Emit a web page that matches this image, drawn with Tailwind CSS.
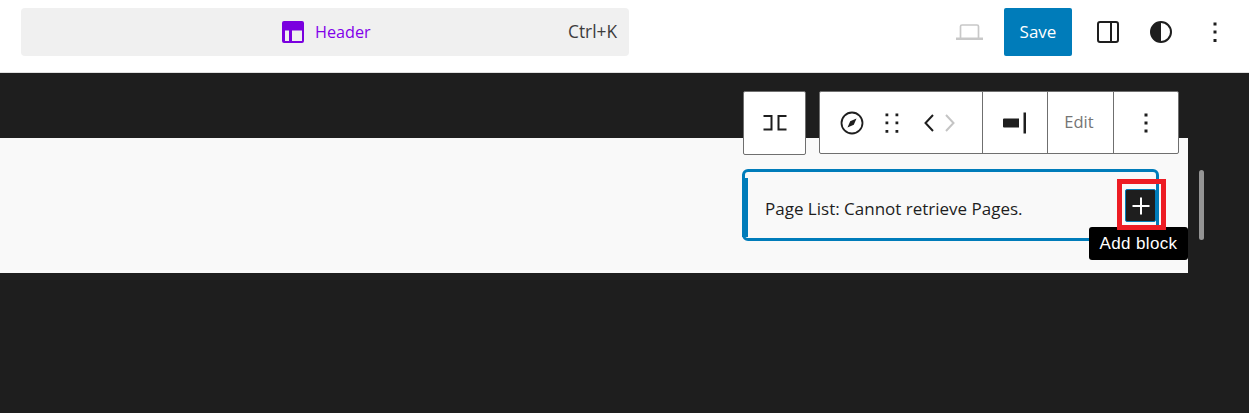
<!DOCTYPE html>
<html lang="en">
<head>
  <meta charset="UTF-8">
  <title>Header</title>
  <script src="https://cdn.jsdelivr.net/npm/@tailwindcss/browser@4"></script>
</head>
<body class="h-[413px] overflow-hidden bg-[#1e1e1e] font-['Open_Sans','Noto_Sans',sans-serif] text-[#1e1e1e]">

  <!-- Top bar -->
  <header class="flex h-[73px] items-start border-b border-[#e0e0e0] bg-white pt-2">
    <div class="ml-[21px] flex h-12 w-[608px] items-center rounded-[4px] bg-[#f0f0f0] pr-3">
      <div class="ml-[261px] flex items-center text-[16.200px] text-[#8200ea]">
        <svg class="h-[22px] w-[22px]" viewBox="0 0 22 22"><path fill="#7a00df" fill-rule="evenodd" d="M2 0h18a2 2 0 0 1 2 2v18a2 2 0 0 1-2 2H2a2 2 0 0 1-2-2V2a2 2 0 0 1 2-2Zm1 9.500V20h4V9.500H3Zm7 0V20h10V9.500H10Z"/></svg>
        <span class="ml-[11px]">Header</span>
      </div>
      <span class="ml-auto text-[17.300px] text-[#3c3c3c]">Ctrl+K</span>
    </div>

    <svg class="ml-[327px] mt-4 h-4 w-[27px]" viewBox="0 0 27 16"><path fill="none" stroke="#c8c8c8" stroke-width="1.700" d="M4.500 14V2.500a1.500 1.500 0 0 1 1.500-1.500h15a1.500 1.500 0 0 1 1.500 1.500V14"/><path fill="#c8c8c8" d="M0 13.500h27V16H0z"/></svg>
    <button class="ml-[21px] flex h-12 w-[68px] items-center justify-center rounded-[2px] bg-[#007cba] text-[17px] text-white">Save</button>
    <svg class="ml-[25px] mt-[13px] h-[22px] w-[22px]" viewBox="0 0 22 22"><path fill="none" stroke="#1e1e1e" stroke-width="2" d="M3 1h16a2 2 0 0 1 2 2v16a2 2 0 0 1-2 2H3a2 2 0 0 1-2-2V3a2 2 0 0 1 2-2ZM14 1v20"/></svg>
    <svg class="ml-[31px] mt-[13px] h-[22px] w-[22px]" viewBox="0 0 22 22"><circle cx="11" cy="11" r="10" fill="none" stroke="#1e1e1e" stroke-width="2"/><path fill="#1e1e1e" d="M11 1a10 10 0 0 0 0 20Z"/></svg>
    <svg class="ml-[31px] mt-3 h-6 w-6" viewBox="0 0 24 24"><path fill="#1e1e1e" d="M10.500 2.500h3v3h-3zM10.500 10.500h3v3h-3zM10.500 19h3v3h-3z"/></svg>
  </header>

  <!-- Canvas -->
  <main class="relative h-[340px]">
    <section class="absolute left-0 top-[65px] h-[135px] w-[1188px] bg-[#f9f9f9]"></section>

    <!-- Selected block -->
    <div class="absolute left-[742px] top-[96px] flex h-[72px] w-[417px] items-center rounded-[6px] border-[3px] border-[#007cba] bg-[#f9f9f9] pl-5 pt-[7px] text-[17px]">
      <span class="absolute -left-[3px] bottom-[1px] top-[6px] w-[6px] bg-[#007cba]"></span>
      Page List: Cannot retrieve Pages.
    </div>

    <!-- Block toolbar -->
    <div class="absolute left-[743px] top-[18px] flex h-16 w-[63px] items-center justify-center rounded-[2px] border border-[#6f6f6f] bg-white">
      <svg class="h-6 w-6" viewBox="0 0 24 24"><path fill="none" stroke="#1e1e1e" stroke-width="2" d="M0.500 5h8v13.500h-8M23.500 5h-8v13.500h8"/></svg>
    </div>
    <div class="absolute left-[819px] top-[18px] flex h-[63px] w-[360px] items-stretch rounded-[2px] border border-[#6f6f6f] bg-white">
      <div class="flex w-[162px] items-center pl-5">
        <svg class="h-6 w-6" viewBox="0 0 24 24"><circle cx="12" cy="12" r="10.500" fill="none" stroke="#1e1e1e" stroke-width="1.800"/><path fill="#1e1e1e" d="m16.500 7.500-6.300 2.700-2.700 6.300 6.300-2.700 2.700-6.300Z"/></svg>
        <svg class="ml-4 h-6 w-6" viewBox="0 0 24 24"><path fill="#1e1e1e" d="M5.500 2.500h2.800v2.800H5.500zM15.500 2.500h2.800v2.800h-2.800zM5.500 10.500h2.800v2.800H5.500zM15.500 10.500h2.800v2.800h-2.800zM5.500 19h2.800v2.800H5.500zM15.500 19h2.800v2.800h-2.800z"/></svg>
        <svg class="ml-[18px] h-6 w-[33px]" viewBox="0 0 33 24"><path fill="none" stroke="#1e1e1e" stroke-width="2" d="M11 4 3.500 12 11 20"/><path fill="none" stroke="#c4c4c4" stroke-width="2" d="M24 4l7.500 8-7.500 8"/></svg>
      </div>
      <div class="flex w-[65px] items-center border-l border-[#6f6f6f] pl-5">
        <svg class="h-6 w-6" viewBox="0 0 24 24"><path fill="#1e1e1e" d="M1 7.500h15a1 1 0 0 1 0 0v9H1a1 1 0 0 1-1-1v-7a1 1 0 0 1 1-1ZM20.500 1.500h2.500v21h-2.500z"/></svg>
      </div>
      <div class="flex w-[66px] items-center justify-center border-l border-[#6f6f6f] pr-[3px] text-[16.500px] text-[#757575]">Edit</div>
      <div class="flex flex-1 items-center justify-center border-l border-[#6f6f6f]">
        <svg class="h-6 w-6" viewBox="0 0 24 24"><path fill="#1e1e1e" d="M10.500 2.500h3v3h-3zM10.500 10.500h3v3h-3zM10.500 18.500h3v3h-3z"/></svg>
      </div>
    </div>

    <!-- Add block button with highlight -->
    <button class="absolute left-[1125px] top-[116px] flex h-[33px] w-[31px] items-center justify-center rounded-[2px] border border-[#007cba] bg-[#1e1e1e]">
      <svg class="h-6 w-6" viewBox="0 0 24 24"><path fill="none" stroke="#fff" stroke-width="2" d="M12 3.500v17M3.500 12h17"/></svg>
    </button>
    <div class="absolute left-[1089px] top-[154px] flex h-[33px] w-[99px] items-center justify-center rounded-[3px] bg-black font-['Liberation_Sans',sans-serif] text-[17px] tracking-[0.35px] text-white">Add block</div>
    <div class="absolute left-[1117px] top-[106px] h-[51px] w-[49px] border-[5px] border-[#ed1c24]"></div>

    <!-- Scrollbar thumb -->
    <div class="absolute left-[1199px] top-[97px] h-[70px] w-[5px] rounded-full bg-[#949494]"></div>
  </main>

</body>
</html>
